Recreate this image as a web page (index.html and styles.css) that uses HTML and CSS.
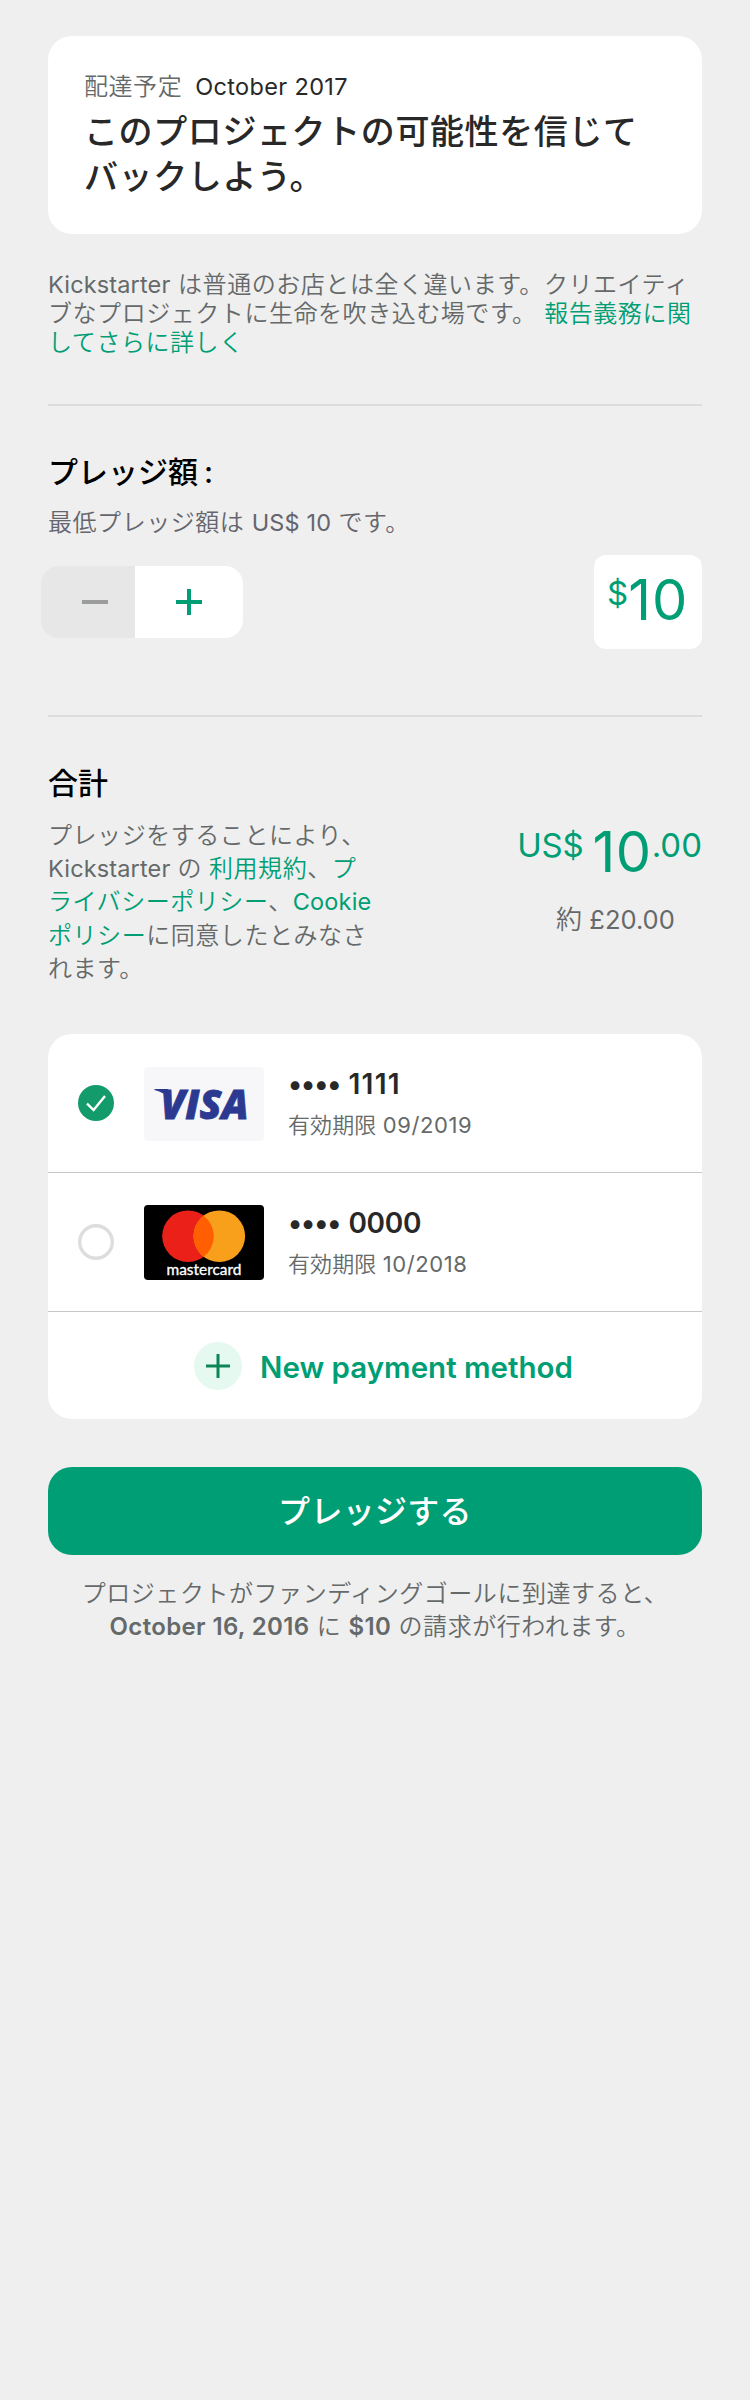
FILE: index.html
```html
<!DOCTYPE html>
<html lang="ja">
<head>
<meta charset="utf-8">
<title>プレッジ</title>
<link rel="stylesheet" href="styles.css">
</head>
<body>
<main class="page">
  <section class="reward">
    <p class="reward-date"><span class="muted">配達予定</span><span class="month">October 2017</span></p>
    <h1 class="reward-title">このプロジェクトの可能性を信じて<br>バックしよう。</h1>
  </section>
  <p class="notice"><span class="latin">Kickstarter</span> は普通のお店とは全く違います。クリエイティ<br>ブなプロジェクトに生命を吹き込む場です。 <a>報告義務に関<br>してさらに詳しく</a></p>

  <section class="pledge">
    <h2 class="heading">プレッジ額<span class="colon">:</span></h2>
    <p class="minimum">最低プレッジ額は <span class="latin">US$ 10</span> です。</p>
    <div class="pledge-row">
      <div class="stepper">
        <button class="step step-off"><svg width="26" height="26" viewBox="0 0 26 26"><path d="M0 13H26" stroke="currentColor" stroke-width="4"/></svg></button>
        <button class="step step-on"><svg width="26" height="26" viewBox="0 0 26 26"><path d="M0 13H26M13 0V26" stroke="currentColor" stroke-width="4"/></svg></button>
      </div>
      <div class="amount"><span class="amount-sign">$</span><span class="amount-value">10</span></div>
    </div>
  </section>

  <section class="total">
    <h2 class="heading">合計</h2>
    <div class="total-row">
      <p class="terms">プレッジをすることにより、<br><span class="latin">Kickstarter</span> の <a>利用規約</a>、<a>プ<br>ライバシーポリシー</a>、<a><span class="latin">Cookie</span><br>ポリシー</a>に同意したとみなさ<br>れます。</p>
      <div class="sum">
        <div class="sum-main"><span class="sum-small sum-currency">US$</span><span class="sum-large">10</span><span class="sum-small sum-cents">.00</span></div>
        <p class="approx">約 <span class="latin">£20.00</span></p>
      </div>
    </div>
  </section>

  <section class="methods">
    <div class="method">
      <svg class="radio" width="36" height="36" viewBox="0 0 36 36"><circle cx="18" cy="18" r="18" fill="#139b6b"/><path d="M9 18.7L15.6 25L27 11" fill="none" stroke="#fff" stroke-width="2.4"/></svg>
      <svg class="brand brand-visa" width="120" height="74" viewBox="0 0 120 74">
        <rect width="120" height="74" rx="4" fill="#f7f7fa"/>
        <text class="visa" x="16.5" y="51.7" textLength="88" lengthAdjust="spacingAndGlyphs">VISA</text>
        <path d="M10.5 22H24L27 33Q20 25 10.5 23Z" fill="#2b3990"/>
      </svg>
      <div class="method-info"><p class="number"><span class="dots">••••</span><span class="ones">1111</span></p><p class="expiry">有効期限 <span class="latin">09/2019</span></p></div>
    </div>
    <div class="method">
      <svg class="radio" width="36" height="36" viewBox="0 0 36 36"><circle cx="18" cy="18" r="16.3" fill="none" stroke="#dcdedd" stroke-width="3.4"/></svg>
      <svg class="brand" width="120" height="75" viewBox="0 0 120 75">
        <rect width="120" height="75" rx="4" fill="#000"/>
        <circle cx="44" cy="31.2" r="25.8" fill="#eb2119"/>
        <circle cx="75.3" cy="31.2" r="25.8" fill="#f8a01c"/>
        <path d="M59.65 10.7A25.8 25.8 0 0 1 59.65 51.7A25.8 25.8 0 0 1 59.65 10.7Z" fill="#ff5f00"/>
        <text class="mastercard" x="22.5" y="69.8" textLength="75" lengthAdjust="spacingAndGlyphs">mastercard</text>
      </svg>
      <div class="method-info"><p class="number"><span class="dots">••••</span>0000</p><p class="expiry">有効期限 <span class="latin">10/2018</span></p></div>
    </div>
    <div class="new-method">
      <svg width="48" height="48" viewBox="0 0 48 48"><circle cx="24" cy="24" r="24" fill="#e5f9f1"/><path d="M12 24H36M24 12V36" stroke="#0c8556" stroke-width="3"/></svg>
      <span class="new-label">New payment method</span>
    </div>
  </section>

  <button class="submit">プレッジする</button>
  <p class="footnote">プロジェクトがファンディングゴールに到達すると、<br><b>October 16, 2016</b> に <b>$10</b> の請求が行われます。</p>
</main>
</body>
</html>
```
FILE: styles.css
```css
* { box-sizing: border-box; margin: 0; padding: 0; }
body {
  background: #efefef;
  color: #656969;
  font-family: Inter, "Noto Sans CJK JP", sans-serif;
  font-size: 24px;
  font-weight: 350;
  letter-spacing: 0.55px;
  white-space: nowrap;
}
.page { height: 2400px; padding: 36px 48px; }
a { color: #009e74; }
button { border: 0; font-family: inherit; }
.latin { font-size: 23.5px; font-weight: 400; letter-spacing: 0.15px; }

.reward { height: 198px; padding: 35px 36px; border-radius: 24px; background: #fff; color: #282828; }
.reward-date { line-height: 32px; }
.muted { color: #656969; margin-right: 13px; }
.month { font-size: 23.5px; font-weight: 400; letter-spacing: 0.35px; }
.reward-title { margin-top: 7px; font-size: 34px; font-weight: 500; line-height: 44.5px; letter-spacing: 0.6px; }

.notice { height: 134px; margin-top: 36px; line-height: 29px; word-spacing: 0.3px; }

.pledge, .total { border-top: 2px solid #dcdcdc; }
.pledge { height: 311px; padding-top: 46px; }
.heading { color: #000; font-size: 30px; font-weight: 500; line-height: 40px; letter-spacing: 0; }
.colon { margin-left: 6px; }
.minimum { margin-top: 14px; line-height: 34px; color: #65656d; }
.pledge-row { display: flex; justify-content: space-between; align-items: center; margin-top: 15px; }
.stepper { display: flex; width: 202px; height: 72px; margin-left: -7px; border-radius: 18px; overflow: hidden; }
.step { display: flex; align-items: center; }
.step-off { width: 94px; padding-left: 41px; background: #e7e7e7; color: #9a9d9c; }
.step-on { width: 108px; padding-left: 41px; background: #fff; color: #009e74; }
.amount { display: flex; align-items: flex-start; width: 108px; height: 94px; padding: 11px 0 0 13px; border-radius: 12px; background: #fff; color: #009e74; font-weight: 400; letter-spacing: 0; }
.amount-sign { font-size: 33px; line-height: 55px; }
.amount-value { font-size: 56px; line-height: 69px; letter-spacing: 1px; }

.total { padding-top: 46px; height: 319px; }
.total-row { display: flex; justify-content: space-between; margin-top: 16px; }
.terms { line-height: 33.2px; word-spacing: -0.3px; }
.sum { width: 184px; }
.sum-main { display: flex; justify-content: flex-end; color: #009e74; font-weight: 400; line-height: 60px; letter-spacing: 0; }
.sum-small { font-size: 33px; line-height: 52px; }
.sum-currency { margin-right: 9px; letter-spacing: -0.2px; }
.sum-large { font-size: 56px; line-height: 67px; letter-spacing: 0.5px; }
.approx { margin: 16px 0 0 38px; font-size: 26px; line-height: 36px; letter-spacing: 0; }
.approx .latin { font-size: 25.5px; letter-spacing: 0; }

.methods { height: 385px; border-radius: 24px; background: #fff; overflow: hidden; }
.method { display: flex; align-items: center; height: 139px; padding-left: 30px; border-bottom: 1px solid #c6c6c6; }
.brand { margin: 1px 0 0 30px; }
.brand-visa { margin-top: 2px; }
.method-info { margin: 1px 0 0 24px; }
.visa { fill: #2b3990; stroke: #2b3990; stroke-width: 0.8px; font: italic 800 41px "Open Sans", sans-serif; letter-spacing: 0; }
.mastercard { fill: #fff; stroke: #fff; stroke-width: 0.3px; font: 15px Lato, sans-serif; letter-spacing: 0; }
.number { color: #282828; font-size: 28px; font-weight: 600; line-height: 38px; letter-spacing: -0.3px; }
.dots { margin-right: 8px; letter-spacing: -1px; }
.ones { letter-spacing: 1.3px; }
.expiry { margin-top: 5px; font-size: 22px; line-height: 34px; letter-spacing: 0.1px; }
.expiry .latin { font-size: 22px; letter-spacing: 0.6px; }
.new-method { display: flex; align-items: center; height: 107px; padding-left: 146px; }
.new-label { margin: 3px 0 0 18px; color: #009e74; font-size: 29.5px; font-weight: 600; letter-spacing: 0; }

.submit { display: block; width: 654px; height: 88px; margin-top: 48px; padding-bottom: 5px; border-radius: 24px; background: #009e74; color: #fff; font-size: 32px; font-weight: 500; letter-spacing: 0.3px; }
.footnote { margin-top: 23px; line-height: 32.5px; text-align: center; }
.footnote b { font-size: 24px; font-weight: 600; letter-spacing: 0.35px; }
```
